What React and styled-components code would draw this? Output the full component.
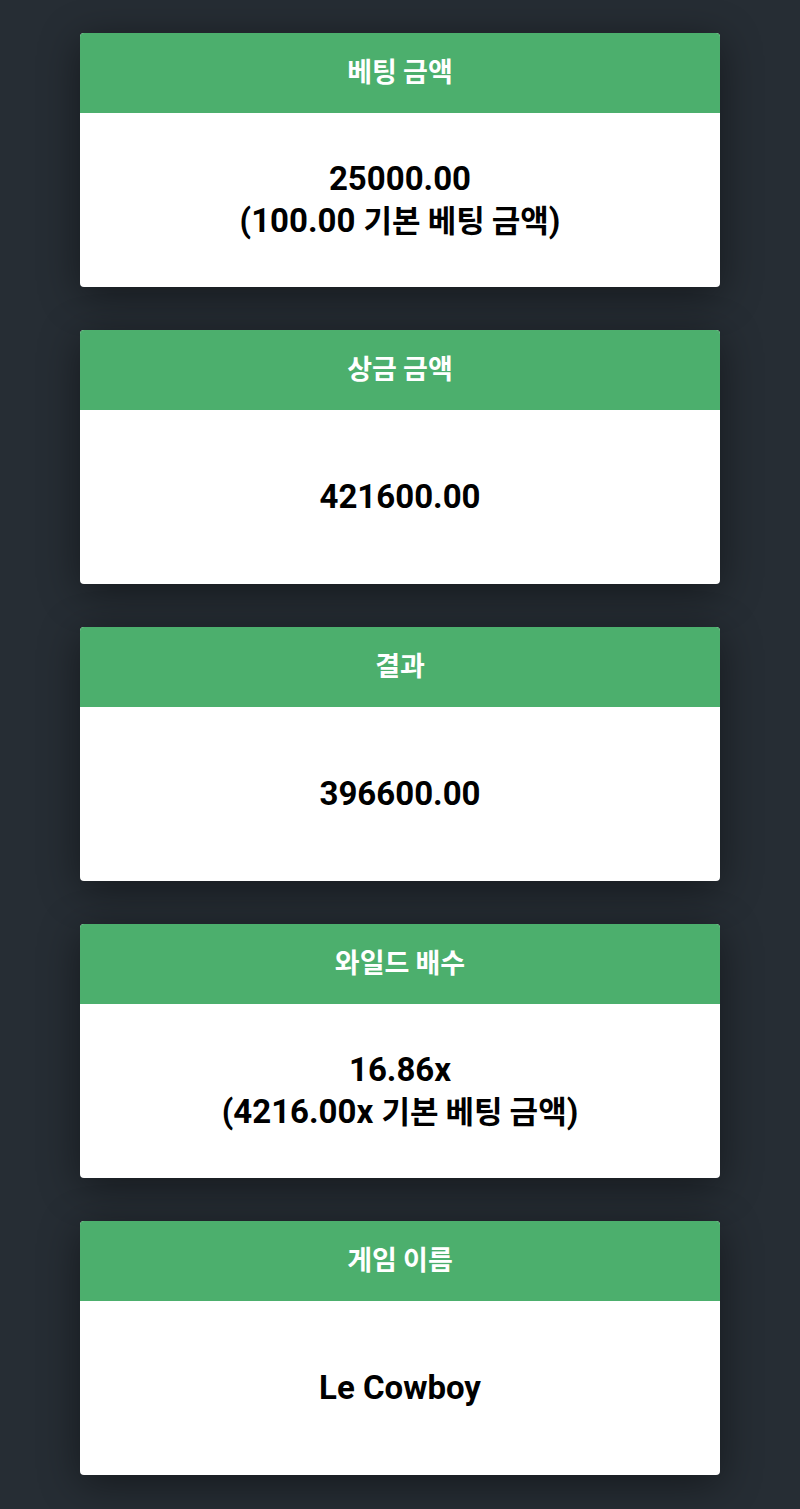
import styled, { createGlobalStyle } from 'styled-components';

const GlobalStyle = createGlobalStyle`
  html, body {
    margin: 0;
    padding: 0;
    background-color: #262d34;
  }
`;

const Page = styled.div`
  display: flex;
  flex-direction: column;
  align-items: center;
  gap: 43px;
  padding: 33px 0 34px;
  min-height: 1509px;
  box-sizing: border-box;
  background-color: #262d34;
  font-family: Roboto, 'Noto Sans CJK KR', sans-serif;
`;

const Card = styled.div`
  width: 640px;
  border-radius: 4px;
  overflow: hidden;
  background-color: #ffffff;
  box-shadow: 0 8px 40px rgba(0, 0, 0, 0.45);
`;

const CardHeader = styled.div`
  height: 80px;
  box-sizing: border-box;
  padding-bottom: 6px;
  display: flex;
  align-items: center;
  justify-content: center;
  background-color: #4caf6d;
  color: #ffffff;
  font-family: 'Noto Sans CJK KR', sans-serif;
  font-size: 27px;
  font-weight: 700;
`;

const CardBody = styled.div`
  height: 174px;
  display: flex;
  flex-direction: column;
  align-items: center;
  justify-content: center;
  color: #000000;
  font-size: 33px;
  font-weight: 700;
  line-height: 40px;
  text-align: center;
`;

const Ko = styled.span`
  font-family: 'Noto Sans CJK KR', sans-serif;
  font-size: 31px;
`;

const items = [
  {
    title: '베팅 금액',
    value: '25000.00',
    note: { amount: '100.00', label: '기본 베팅 금액' },
  },
  { title: '상금 금액', value: '421600.00' },
  { title: '결과', value: '396600.00' },
  {
    title: '와일드 배수',
    value: '16.86x',
    note: { amount: '4216.00x', label: '기본 베팅 금액' },
  },
  { title: '게임 이름', value: 'Le Cowboy' },
];

const App = () => {
  return (
    <>
      <GlobalStyle />
      <Page>
        {items.map((item) => (
          <Card key={item.title}>
            <CardHeader>{item.title}</CardHeader>
            <CardBody>
              <div>{item.value}</div>
              {item.note && (
                <div>
                  ({item.note.amount} <Ko>{item.note.label}</Ko>)
                </div>
              )}
            </CardBody>
          </Card>
        ))}
      </Page>
    </>
  );
};

export default App;
